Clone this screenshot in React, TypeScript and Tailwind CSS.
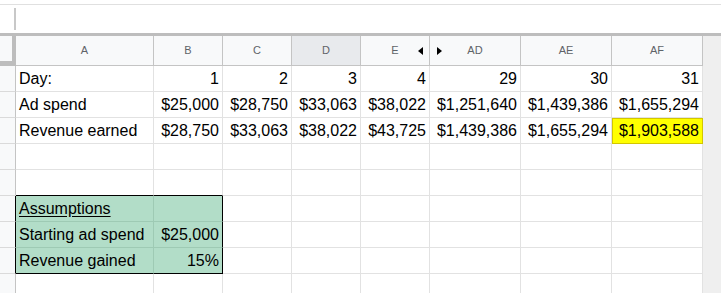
import React from 'react';

type Col = { key: string; w: string; selected?: boolean };

const COLS: Col[] = [
  { key: 'A', w: 'w-[138px]' },
  { key: 'B', w: 'w-[69px]' },
  { key: 'C', w: 'w-[69px]' },
  { key: 'D', w: 'w-[69px]', selected: true },
  { key: 'E', w: 'w-[69px]' },
  { key: 'AD', w: 'w-[91px]' },
  { key: 'AE', w: 'w-[91px]' },
  { key: 'AF', w: 'w-[91px]' },
];

const ROWS: (string | number)[][] = [
  ['Day:', 1, 2, 3, 4, 29, 30, 31],
  ['Ad spend', '$25,000', '$28,750', '$33,063', '$38,022', '$1,251,640', '$1,439,386', '$1,655,294'],
  ['Revenue earned', '$28,750', '$33,063', '$38,022', '$43,725', '$1,439,386', '$1,655,294', '$1,903,588'],
  [],
  [],
  ['Assumptions', ''],
  ['Starting ad spend', '$25,000'],
  ['Revenue gained', '15%'],
  [],
];

// rows 6-8 (index 5-7) hold the green assumptions box
const inBox = (r: number, c: number) => r >= 5 && r <= 7 && c <= 1;

const HeaderCell: React.FC<{ col: Col; idx: number }> = ({ col, idx }) => (
  <div
    className={`${col.w} h-[30px] shrink-0 flex items-center justify-center border-r border-b border-[#c4c4c4] text-[11px] text-[#5f6368] ${
      col.selected ? 'bg-[#e8eaed]' : 'bg-[#f8f9fa]'
    } ${idx === 4 || idx === 5 ? 'relative' : ''}`}
  >
    {col.key}
    {idx === 4 && (
      <svg className="absolute right-[6px] top-[11px]" width="5" height="8" viewBox="0 0 5 8">
        <path d="M5 0 L0 4 L5 8 Z" fill="#000" />
      </svg>
    )}
    {idx === 5 && (
      <svg className="absolute left-[7px] top-[11px]" width="5" height="8" viewBox="0 0 5 8">
        <path d="M0 0 L5 4 L0 8 Z" fill="#000" />
      </svg>
    )}
  </div>
);

const BodyCell: React.FC<{ r: number; c: number; value: string | number | undefined }> = ({ r, c, value }) => {
  const col = COLS[c];
  const box = inBox(r, c);
  const highlight = r === 2 && c === 7;
  const rightAlign = c > 0;

  let border = 'border-r border-b border-[#e2e2e2]';
  if (box) {
    if (c === 1 && r === 7) border = 'border-r border-b border-r-black border-b-black';
    else if (c === 1) border = 'border-r border-b border-r-black border-b-[#9ecab4]';
    else if (r === 7) border = 'border-r border-b border-r-[#9ecab4] border-b-black';
    else border = 'border-r border-b border-[#9ecab4]';
  } else if (r === 4 && c <= 1) {
    border = 'border-r border-b border-r-[#e2e2e2] border-b-black';
  } else if (highlight) {
    border = 'border-r border-b border-[#d3c600] shadow-[inset_1px_1px_0_0_#d3c600]';
  }

  return (
    <div
      className={`${col.w} h-[26px] shrink-0 flex items-end pb-[3px] px-[3px] text-[16px] leading-[normal] text-black whitespace-nowrap ${border} ${
        rightAlign ? 'justify-end' : 'justify-start'
      } ${box ? 'bg-[#b2ddc8]' : highlight ? 'bg-[#ffff00]' : 'bg-white'}`}
    >
      {r === 5 && c === 0 ? <span className="underline underline-offset-[2px]">{value}</span> : value}
    </div>
  );
};

export default function App() {
  return (
    <div className="w-[721px] h-[293px] overflow-hidden bg-white font-['Liberation_Sans',Arial,sans-serif]">
      {/* formula bar remnant */}
      <div className="h-[4px]" />
      <div className="h-[29px] border-t border-[#e0e0e0]">
        <div className="ml-[14px] mt-[3px] w-[2px] h-[22px] bg-[#c8c8c8]" />
      </div>
      <div className="h-[3px] bg-[#bdbdbd]" />

      <div className="flex">
        <div className="w-[703px] shrink-0">
          {/* column headers */}
          <div className="flex">
            <div className="w-[16px] h-[30px] shrink-0 bg-[#f8f9fa] border-r-4 border-b-[5px] border-[#bdbdbd]" />
            {COLS.map((col, i) => (
              <HeaderCell key={col.key} col={col} idx={i} />
            ))}
          </div>

          {ROWS.map((row, r) => (
            <div key={r} className="flex">
              <div
                className={`w-[16px] h-[26px] shrink-0 bg-[#f8f9fa] border-r border-b border-b-[#dadada] ${
                  r >= 5 && r <= 7 ? 'border-r-black' : 'border-r-[#c4c4c4]'
                }`}
              />
              {COLS.map((col, c) => (
                <BodyCell key={col.key} r={r} c={c} value={row[c]} />
              ))}
            </div>
          ))}
        </div>
        <div className="flex-1 bg-[#efefef]" />
      </div>
    </div>
  );
}
